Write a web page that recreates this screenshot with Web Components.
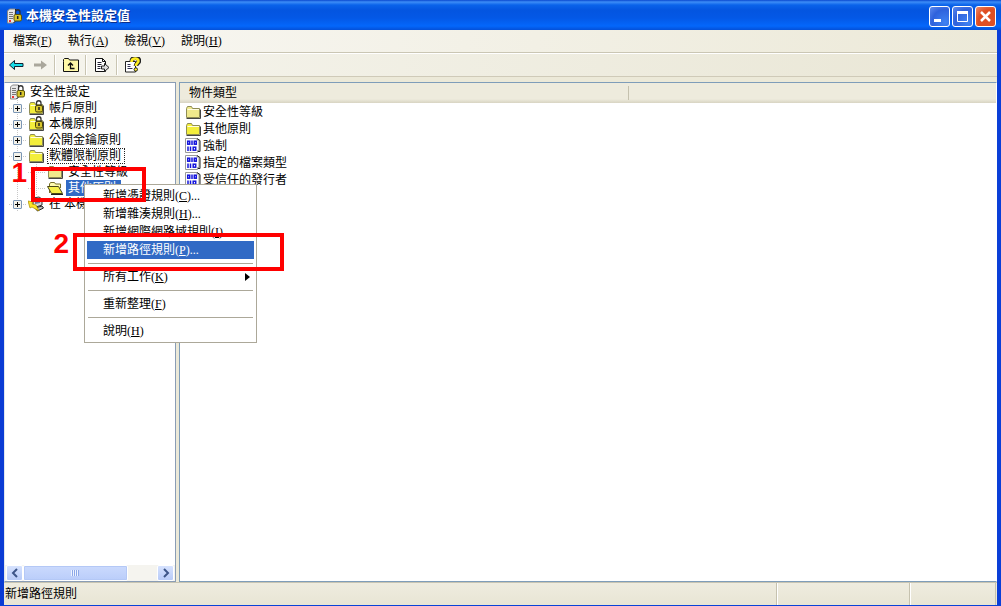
<!DOCTYPE html>
<html lang="zh-Hant">
<head>
<meta charset="utf-8">
<title>本機安全性設定值</title>
<style>
body{margin:0;font:12px/16px "Liberation Serif","Noto Sans CJK TC",serif;color:#000;background:#fff}
</style>
</head>
<body>
<policy-window></policy-window>
<script>
const define=(name,html,setup)=>{
  const t=document.createElement('template');
  t.innerHTML=html;
  customElements.define(name,class extends HTMLElement{
    constructor(){
      super();
      this.attachShadow({mode:'open'}).append(t.content.cloneNode(true));
    }
    connectedCallback(){ if(setup) setup(this,this.shadowRoot); }
  });
};

const folderShape=fill=>'<path d="M1.500 4.500l1-2h4l1 2h7V13.500H1.500z" fill="'+fill+'" stroke="#8f8d55"/><path d="M2.500 5.500h11.500" stroke="#fffde0"/><path d="M1.500 14.500h14V5.500" fill="none" stroke="#444"/>';
const folder=folderShape('#f3ee3c');
const server='<path d="M1.500 3l2-2h6v12l-2 2h-6z" fill="#e8e8e8" stroke="#888"/><path d="M9.500 1v12l-2 2" fill="none" stroke="#222"/><path d="M3 4.500h4M3 6.500h4M3 8.500h4M3 10.500h4" stroke="#777"/><path d="M3 13h2" stroke="#e33" stroke-width="2"/>';
const lock='<path d="M9.500 7V4a2.200 2.200 0 0 1 4.500 0V7" fill="none" stroke="#333" stroke-width="1.300"/><rect x="8" y="6.500" width="7.500" height="6.500" rx="1.500" fill="#d8c62c" stroke="#5a5208"/><path d="M11.700 8v3" stroke="#222" stroke-width="1.500"/>';
const icons={
  server:server+lock,
  folder,
  palefolder:folderShape('#f0e98c'),
  lockfolder:folder+'<path d="M8.500 6V3a2.200 2.200 0 0 1 4.500 0V6" fill="none" stroke="#333" stroke-width="1.300"/><rect x="7.500" y="5.500" width="7" height="6.500" rx="1.500" fill="#d8c62c" stroke="#4a4308"/><path d="M11 7v3" stroke="#222" stroke-width="1.500"/>',
  openfolder:'<path d="M2.500 13V4l1-1.500h4l1 1.500h5V8" fill="#fffbb0" stroke="#77702a"/><path d="M.5 6.500h11l4 7h-11z" fill="#f6f04a" stroke="#4a4618"/><path d="M4 14.500h12" stroke="#222"/>',
  ipsec:'<path d="M5 2l6-1 3 2v6l-6 2-3-2z" fill="#d8d8d8" stroke="#333"/><path d="M7 4l5-1v4l-5 1z" fill="#6b7899"/><path d="M7 12l7-2 1.500 2-6 3z" fill="#bbb" stroke="#222"/><path d="M0 5l5 1-1 2 4 1 3 6-7-4-2 1z" fill="#ffe628" stroke="#a88b00" stroke-width=".7"/>',
  policy:'<path d="M.5.500h11.500v1.500h2v10.500h-1.500v2H.5z" fill="#fff" stroke="#999"/><path d="M12 .5l3 2v11h-2" fill="none" stroke="#222"/><g fill="none" stroke="#1414dc" stroke-width="1.500"><rect x="2.700" y="3.200" width="2" height="3"/><path d="M7 2.500v4.500"/><rect x="9.300" y="3.200" width="2" height="3"/><path d="M3 8.500v4.500M5.500 8.500v4.500"/><rect x="8.200" y="9.200" width="2.500" height="3"/></g>',
  back:'<path d="M.5 8L5.500 3.500v3h8.500v3H5.500v3z" fill="#18dce8" stroke="#123"/>',
  forward:'<path d="M2 6.500H9v-3L15 8l-6 4.500v-3H2z" fill="#aaa79c"/>',
  up:'<path d="M.5 4.500v-2l1-1h4l1 1.500h9V14.500H.5z" fill="#fff8a8" stroke="#111"/><path d="M11.500 11.500H7.500V6M5 8.500L7.500 6 10 8.500" fill="none" stroke="#111" stroke-width="1.300"/>',
  exportlist:'<path d="M1.500 1.500h7l3 3v10h-10z" fill="#fff" stroke="#111"/><path d="M8.500 1.500v3h3" fill="none" stroke="#111"/><path d="M3.500 5.500h4M3.500 7.500h4M3.500 9.500h3M3.500 11.500h3" stroke="#223"/><path d="M7.500 9h3V6.500l4.500 4-4.500 4V12h-3z" fill="#ddd" stroke="#222"/>',
  help:'<path d="M.5 4.500h10v10.500H.5z" fill="#fff" stroke="#222"/><path d="M2.500 7.500h3M2.500 9.500h3M2.500 11.500h5" stroke="#335"/><path d="M6.500 5C6.500-.5 14-.5 14 4c0 2-3 2.500-3 5" fill="none" stroke="#222" stroke-width="4.500"/><path d="M6.500 5C6.500.5 13.500.5 13.500 4c0 2-2.700 2.500-2.700 5" fill="none" stroke="#ffee20" stroke-width="2.600"/><circle cx="10.800" cy="12.500" r="1.700" fill="#ffee20" stroke="#222"/>'
};
define('ui-icon','<style>:host{display:block;width:16px;height:16px;flex:none}svg{display:block;width:100%;height:100%}</style><svg viewBox="0 0 16 16" aria-hidden="true"></svg>',
  (h,r)=>{r.querySelector('svg').innerHTML=icons[h.getAttribute('name')]||''});

define('caption-button',`<style>
:host{display:block;width:21px;height:21px}
button{display:block;box-sizing:border-box;width:100%;height:100%;padding:0;border:1px solid #fff;border-radius:3px;background:radial-gradient(circle at 80% 80%,#3f82f2,#2f62dc 60%,#5f8bee)}
:host([kind=close]) button{background:radial-gradient(circle at 80% 80%,#dd5028,#df4e22 60%,#ee8c6c)}
svg{display:block;width:19px;height:19px;fill:none;stroke:#fff}
</style><button type="button"><svg viewBox="0 0 19 19"></svg></button>`,(h,r)=>{
  const k=h.getAttribute('kind');
  r.querySelector('button').setAttribute('aria-label',{min:'最小化',max:'最大化',close:'關閉'}[k]);
  r.querySelector('svg').innerHTML={
    min:'<path d="M4 13.500h7" stroke-width="3"/>',
    max:'<path d="M4.500 5v9.500h10V5" /><path d="M4 5.500h11" stroke-width="3"/>',
    close:'<path d="M5 5l9 9M14 5l-9 9" stroke-width="2.500"/>'}[k];
});

define('title-bar',`<style>
:host{display:flex;align-items:center;height:30px;padding:2px 5px 0 6px;box-sizing:border-box;gap:4px;color:#fff;
background:linear-gradient(#0a48cf 0,#3d8df7 2px,#0a63ea 5px,#0455e0 10px,#0458e6 18px,#0467fb 26px,#0450d8 30px)}
h1{flex:1;margin:0;font-size:13px;line-height:18px;font-weight:bold;text-shadow:1px 1px #0b2f8c}
div{display:flex;gap:2px}
</style><ui-icon name="server"></ui-icon><h1><slot></slot></h1><div><caption-button kind="min"></caption-button><caption-button kind="max"></caption-button><caption-button kind="close"></caption-button></div>`);

define('menu-button',`<style>:host{display:block}button{display:block;border:0;background:none;font:inherit;color:inherit;padding:0 8px;line-height:22px}</style><button type="button"><slot></slot></button>`);
define('menu-bar',`<style>:host{display:flex;height:22px;padding-left:1px;border-bottom:1px solid #cac6b4;background:linear-gradient(90deg,#f9f8f4,#ece9d8)}</style><slot></slot>`);

define('tool-button',`<style>:host{display:block}button{display:flex;align-items:center;justify-content:center;width:23px;height:21px;padding:0;border:0;background:none}</style><button type="button"><ui-icon></ui-icon></button>`,(h,r)=>{
  r.querySelector('ui-icon').setAttribute('name',h.getAttribute('icon'));
  r.querySelector('ui-icon').connectedCallback();
  r.querySelector('button').setAttribute('aria-label',h.getAttribute('label'));
});
define('tool-separator',`<style>:host{display:block;width:1px;height:20px;margin:0 3px;background:#c9c5b2;border-right:1px solid #fff}</style>`);
define('tool-bar',`<style>:host{display:flex;align-items:center;height:22px;padding-left:1px;border-top:1px solid #fff;border-bottom:1px solid #cfcab8;background:linear-gradient(90deg,#f6f5ee,#e9e6d5)}</style><slot></slot>`);

define('tree-row',`<style>
:host{display:flex;align-items:center;height:16px;white-space:nowrap}
.guide{position:relative;flex:none;width:19px;height:16px}
.guide.v{background:linear-gradient(#c8c8c8 50%,transparent 50%) 9px 0/1px 2px repeat-y}
.guide.h{background:linear-gradient(#c8c8c8 50%,transparent 50%) 9px 0/1px 2px repeat-y,linear-gradient(90deg,#c8c8c8 50%,transparent 50%) 9px 8px/2px 1px repeat-x}
button{position:absolute;left:5px;top:4px;box-sizing:border-box;width:9px;height:9px;padding:0;border:1px solid #7b96b5;border-radius:1px;background:linear-gradient(90deg,#000,#000) center/5px 1px no-repeat,#f4f2ea}
button.plus{background:linear-gradient(#000,#000) center/5px 1px no-repeat,linear-gradient(#000,#000) center/1px 5px no-repeat,#f4f2ea}
ui-icon{margin-left:1px}
span{box-sizing:border-box;height:16px;line-height:14px;margin-left:3px;border:1px solid transparent;padding:0 1px}
:host([focus]) span{border:1px dotted #222;padding-right:3px}
:host([selected]) span{background:#316ac5;color:#fff;padding-right:4px}
</style><ui-icon></ui-icon><span><slot></slot></span>`,(h,r)=>{
  const icon=r.querySelector('ui-icon'),level=+h.getAttribute('level'),state=h.getAttribute('state');
  icon.setAttribute('name',h.getAttribute('icon'));icon.connectedCallback();
  h.setAttribute('role','treeitem');
  for(let i=1;i<=level;i++){
    const g=document.createElement('div');
    g.className='guide '+(i===level?'h':'v');
    if(i===level&&state){
      const b=document.createElement('button');
      b.type='button';b.className=state;b.setAttribute('aria-label',state==='plus'?'展開':'摺疊');
      g.append(b);
    }
    icon.before(g);
  }
});

define('h-scrollbar',`<style>
:host{display:flex;height:16px;background:#f5f4ef;padding:0 1px}
button{box-sizing:border-box;width:17px;height:16px;padding:0;flex:none;border:1px solid #fff;border-radius:2px;background:linear-gradient(#d6e2fe,#b8cbf8)}
svg{display:block;margin:auto;width:8px;height:10px;fill:none;stroke:#3d5588;stroke-width:2}
.track{flex:1;display:flex}
.thumb{box-sizing:border-box;width:78%;border:1px solid #fff;outline:1px solid #b4c8f6;outline-offset:-2px;border-radius:2px;display:flex;align-items:center;justify-content:center;background:linear-gradient(#cbdafd,#bacdfa)}
i{width:8px;height:6px;background:repeating-linear-gradient(90deg,#eef4fe 0 1px,#8ca8e8 1px 2px)}
</style><button type="button" aria-label="向左捲動"><svg viewBox="0 0 8 10"><path d="M6 1L2 5l4 4"/></svg></button><div class="track"><div class="thumb"><i></i></div></div><button type="button" aria-label="向右捲動"><svg viewBox="0 0 8 10"><path d="M2 1l4 4-4 4"/></svg></button>`);

define('policy-tree',`<style>
:host{display:flex;flex-direction:column;box-sizing:border-box;width:172px;flex:none;overflow:hidden;background:#fff;border:1px solid #8a9db5;border-left-color:#dfe6ee}
.rows{flex:1;padding:1px 0 0 3px}
</style><div class="rows" role="tree"><slot></slot></div><h-scrollbar></h-scrollbar>`);

define('object-list',`<style>
:host{display:block;flex:1;min-width:0;overflow:hidden;background:#fff;border:1px solid #7f9db9;border-right-color:#fff}
table{width:100%;border-collapse:collapse;table-layout:fixed}
th{height:20px;box-sizing:border-box;padding:0 0 0 9px;text-align:left;font-weight:normal;background:linear-gradient(#eeebdd 0 16px,#d8d4c2 20px)}
th:first-child{width:449px;background:linear-gradient(#c5c1ae,#c5c1ae) right center/1px 14px no-repeat,linear-gradient(#eeebdd 0 16px,#d8d4c2 20px)}
td{height:17px;padding:0 0 0 5px}
div{display:flex;align-items:center;gap:2px;height:17px}
</style><table><thead><tr><th>物件類型</th><th></th></tr></thead><tbody>
<tr><td><div><ui-icon name="palefolder"></ui-icon>安全性等級</div></td></tr>
<tr><td><div><ui-icon name="folder"></ui-icon>其他原則</div></td></tr>
<tr><td><div><ui-icon name="policy"></ui-icon>強制</div></td></tr>
<tr><td><div><ui-icon name="policy"></ui-icon>指定的檔案類型</div></td></tr>
<tr><td><div><ui-icon name="policy"></ui-icon>受信任的發行者</div></td></tr>
</tbody></table>`);

define('status-bar',`<style>
:host{display:flex;height:22px;border-top:1px solid #c8c4b2;background:linear-gradient(#efecdf,#e8e5d4);line-height:22px}
.text{flex:1;padding-left:1px}
.cell{border-left:1px solid #c6c2af;box-shadow:inset 1px 0 #fff;width:132px}
.grip{width:85px;border-right:1px solid #c6c2af;margin-right:1px}
</style><div class="text"><slot></slot></div><div class="cell"></div><div class="cell grip"></div>`);

define('menu-entry',`<style>
:host{display:block}
button{display:flex;justify-content:space-between;align-items:center;width:100%;height:18px;padding:0 4px 0 16px;border:0;background:none;font:inherit;color:inherit;text-align:left;white-space:nowrap}
:host([selected]) button{background:#316ac5;color:#fff}
svg{display:none;width:5px;height:8px}
:host([submenu]) svg{display:block}
</style><button type="button" role="menuitem"><span><slot></slot></span><svg viewBox="0 0 5 8"><path d="M0 0l5 4-5 4z"/></svg></button>`);
define('menu-line',`<style>:host{display:block;height:1px;margin:4px 1px;background:#aca899}</style>`);
define('context-menu',`<style>:host{display:block;box-sizing:border-box;width:173px;padding:2px;border:1px solid #aca899;background:#fff}</style><slot></slot>`);

define('step-marker',`<style>
:host{display:block;box-sizing:border-box;border:4px solid #f00;pointer-events:none}
b{position:absolute;right:100%;top:var(--label-top);margin-right:8px;font:bold 28px/30px "Liberation Sans",sans-serif;color:#f00}
</style><b><slot></slot></b>`);

define('policy-window',`<style>
:host{position:relative;display:flex;flex-direction:column;min-height:100vh;box-sizing:border-box;border-bottom:1px solid #0a43d8;background:#ece9d8;overflow:hidden}
.client{flex:1;display:flex;flex-direction:column;border:solid #0b3fd8;border-width:0 4px;border-left-color:#0a3bd4}
.panes{flex:1;display:flex;gap:3px;padding-top:5px}
context-menu,step-marker{position:absolute}
context-menu{left:84px;top:184px}
.one{--label-top:-13px;left:31px;top:167px;width:115px;height:35px}
.two{--label-top:-8px;left:73px;top:233px;width:211px;height:38px}
</style>
<title-bar>本機安全性設定值</title-bar>
<div class="client">
<menu-bar><menu-button>檔案(<u>F</u>)</menu-button><menu-button>執行(<u>A</u>)</menu-button><menu-button>檢視(<u>V</u>)</menu-button><menu-button>說明(<u>H</u>)</menu-button></menu-bar>
<tool-bar><tool-button icon="back" label="上一頁"></tool-button><tool-button icon="forward" label="下一頁"></tool-button><tool-separator></tool-separator><tool-button icon="up" label="上一層"></tool-button><tool-separator></tool-separator><tool-button icon="exportlist" label="匯出清單"></tool-button><tool-separator></tool-separator><tool-button icon="help" label="說明"></tool-button></tool-bar>
<div class="panes">
<policy-tree>
<tree-row level="0" icon="server">安全性設定</tree-row>
<tree-row level="1" icon="lockfolder" state="plus">帳戶原則</tree-row>
<tree-row level="1" icon="lockfolder" state="plus">本機原則</tree-row>
<tree-row level="1" icon="folder" state="plus">公開金鑰原則</tree-row>
<tree-row level="1" icon="folder" state="minus" focus>軟體限制原則</tree-row>
<tree-row level="2" icon="palefolder">安全性等級</tree-row>
<tree-row level="2" icon="openfolder" selected>其他原則</tree-row>
<tree-row level="1" icon="ipsec" state="plus">在 本機</tree-row>
</policy-tree>
<object-list></object-list>
</div>
<status-bar>新增路徑規則</status-bar>
</div>
<context-menu role="menu">
<menu-entry>新增憑證規則(<u>C</u>)...</menu-entry>
<menu-entry>新增雜湊規則(<u>H</u>)...</menu-entry>
<menu-entry>新增網際網路域規則(<u>I</u>)</menu-entry>
<menu-entry selected>新增路徑規則(<u>P</u>)...</menu-entry>
<menu-line></menu-line>
<menu-entry submenu>所有工作(<u>K</u>)</menu-entry>
<menu-line></menu-line>
<menu-entry>重新整理(<u>F</u>)</menu-entry>
<menu-line></menu-line>
<menu-entry>說明(<u>H</u>)</menu-entry>
</context-menu>
<step-marker class="one">1</step-marker>
<step-marker class="two">2</step-marker>`);
</script>
</body>
</html>
